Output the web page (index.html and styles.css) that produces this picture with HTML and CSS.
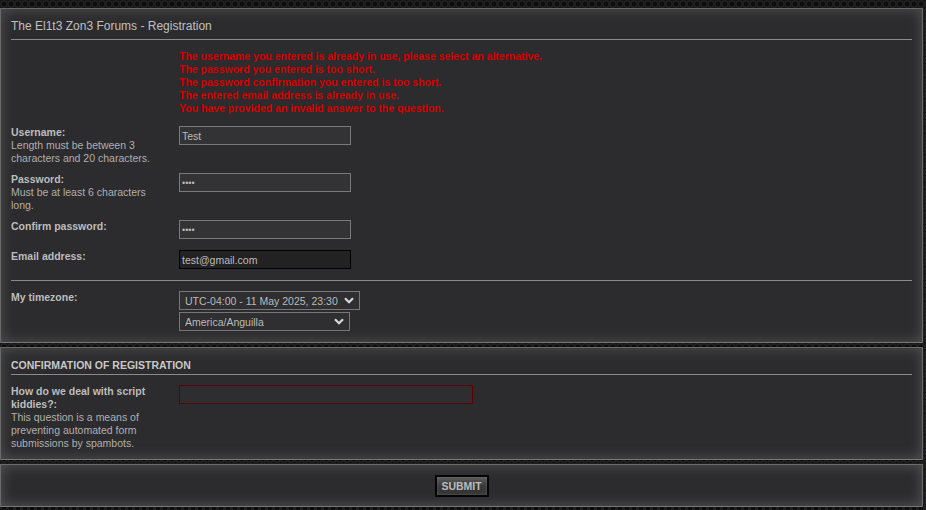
FILE: index.html
```html
<!DOCTYPE html>
<html>
<head>
<meta charset="utf-8">
<link rel="stylesheet" href="styles.css">
</head>
<body>
<div class="panel panel-main">
  <h2 class="title">The El1t3 Zon3 Forums - Registration</h2>
  <div class="errors">
    <div>The username you entered is already in use, please select an alternative.</div>
    <div>The password you entered is too short.</div>
    <div>The password confirmation you entered is too short.</div>
    <div>The entered email address is already in use.</div>
    <div>You have provided an invalid answer to the question.</div>
  </div>
  <div class="row row-tall">
    <div class="dt"><label class="lbl">Username:</label><span class="desc">Length must be between 3 characters and 20 characters.</span></div>
    <div class="dd"><input class="inp" type="text" value="Test"></div>
  </div>
  <div class="row row-tall">
    <div class="dt"><label class="lbl">Password:</label><span class="desc">Must be at least 6 characters long.</span></div>
    <div class="dd"><input class="inp" type="password" value="Test"></div>
  </div>
  <div class="row">
    <div class="dt"><label class="lbl">Confirm password:</label></div>
    <div class="dd"><input class="inp" type="password" value="Test"></div>
  </div>
  <div class="row">
    <div class="dt"><label class="lbl">Email address:</label></div>
    <div class="dd"><input class="inp inp-focus" type="text" value="test@gmail.com"></div>
  </div>
  <hr class="sep">
  <div class="row row-tz">
    <div class="dt"><label class="lbl">My timezone:</label></div>
    <div class="dd dd-stack">
      <div class="selwrap sel-wide">
        <select class="sel"><option>UTC-04:00 - 11 May 2025, 23:30</option></select>
        <svg class="chev" width="10" height="7" viewBox="0 0 10 7"><path d="M1 1.2 L5 5.2 L9 1.2" fill="none" stroke="#d8d8d8" stroke-width="2.2"/></svg>
      </div>
      <div class="selwrap sel-narrow">
        <select class="sel"><option>America/Anguilla</option></select>
        <svg class="chev" width="10" height="7" viewBox="0 0 10 7"><path d="M1 1.2 L5 5.2 L9 1.2" fill="none" stroke="#d8d8d8" stroke-width="2.2"/></svg>
      </div>
    </div>
  </div>
</div>

<div class="panel panel-confirm">
  <h3 class="heading">CONFIRMATION OF REGISTRATION</h3>
  <div class="row row-q">
    <div class="dt"><label class="lbl">How do we deal with script kiddies?:</label><span class="desc">This question is a means of preventing automated form submissions by spambots.</span></div>
    <div class="dd"><input class="inp inp-q" type="text" value=""></div>
  </div>
</div>

<div class="panel panel-submit">
  <button class="submit">SUBMIT</button>
</div>
</body>
</html>
```

FILE: styles.css
```css
html, body {
  margin: 0;
  padding: 0;
}
body {
  height: 510px;
  overflow: hidden;
  background-color: #141414;
  background-image:
    radial-gradient(circle at 4px 4px, #0c0c0c 0, #0e0e0e 2px, #2a2a2a 3.2px, #161616 4px);
  background-size: 7px 7px;
  font-family: "Liberation Sans", Arial, sans-serif;
  font-size: 10.5px;
  color: #bbb;
  padding-top: 8px;
}
.panel {
  margin-bottom: 4px;
  border: 1px solid #6a6a6a;
  border-bottom-color: #777;
  background: #2c2b2d;
  box-shadow: inset 0 0 14px rgba(130, 130, 130, 0.45);
  padding: 0 10px;
  box-sizing: border-box;
  width: 923px;
  border-radius: 1px;
}
.title {
  margin: 0;
  font-weight: normal;
  font-size: 12px;
  line-height: 16px;
  color: #c0c0c0;
  padding: 9px 0 5px 0;
  border-bottom: 1px solid #8a8a8a;
}
.errors {
  margin: 10px 0 11px 168px;
  color: #d40000;
  font-weight: bold;
  font-size: 10.5px;
  line-height: 13px;
}
.row {
  display: flex;
  margin-bottom: 8px;
}
.row-tall {
  min-height: 39px;
}
.dt {
  width: 168px;
  flex: none;
  line-height: 13px;
}
.dt .lbl {
  display: block;
  font-weight: bold;
  color: #bdbdbd;
}
.desc {
  display: block;
  color: #b0b0b0;
  padding-right: 8px;
}
.dd {
  min-height: 22px;
}
.inp {
  display: block;
  box-sizing: border-box;
  width: 172px;
  height: 19px;
  margin: 0;
  padding: 0 2px;
  border: 1px solid #7a7a7a;
  background: #333234;
  color: #bbb;
  font-family: "Liberation Sans", Arial, sans-serif;
  font-size: 10.5px;
  outline: none;
}
.inp[type="password"] {
  font-size: 9px;
}
.inp-focus {
  background: #232223;
  border-color: #000;
}
.sep {
  border: 0;
  border-top: 1px solid #8a8a8a;
  margin: 1px 0 10px 0;
  height: 0;
}
.row-tz {
  margin-bottom: 11px;
}
.dd-stack {
  display: flex;
  flex-direction: column;
  gap: 2px;
}
.selwrap {
  position: relative;
  height: 19px;
}
.sel-wide { width: 181px; }
.sel-narrow { width: 171px; }
.sel {
  -webkit-appearance: none;
  appearance: none;
  display: block;
  box-sizing: border-box;
  width: 100%;
  height: 19px;
  margin: 0;
  padding: 0 0 0 5px;
  border: 1px solid #777;
  border-radius: 0;
  background: #2f2e30;
  color: #bbb;
  font-family: "Liberation Sans", Arial, sans-serif;
  font-size: 10.5px;
  outline: none;
}
.chev {
  position: absolute;
  right: 6px;
  top: 6px;
  pointer-events: none;
}
.panel-confirm {
  padding-bottom: 9px;
}
.heading {
  margin: 0;
  padding: 11px 0 2px 0;
  font-size: 10.5px;
  line-height: 13px;
  font-weight: bold;
  color: #c8c8c8;
  border-bottom: 1px solid #8a8a8a;
}
.row-q {
  margin: 10px 0 0 0;
}
.inp-q {
  width: 294px;
  border-color: #5e0000;
  background: #2e2d2f;
}
.panel-submit {
  display: flex;
  justify-content: center;
  padding-top: 10px;
  padding-bottom: 9px;
  box-shadow: inset 0 0 14px rgba(130, 130, 130, 0.5);
}
.submit {
  width: 54px;
  height: 22px;
  padding: 0;
  border: 2px solid #050505;
  background: linear-gradient(#5a5a5a, #3a3a3a 50%, #333 100%);
  color: #bcbcbc;
  font-family: "Liberation Sans", Arial, sans-serif;
  font-size: 10.5px;
  font-weight: bold;
  box-shadow: inset 0 0 3px rgba(150, 150, 150, 0.5);
}
```
